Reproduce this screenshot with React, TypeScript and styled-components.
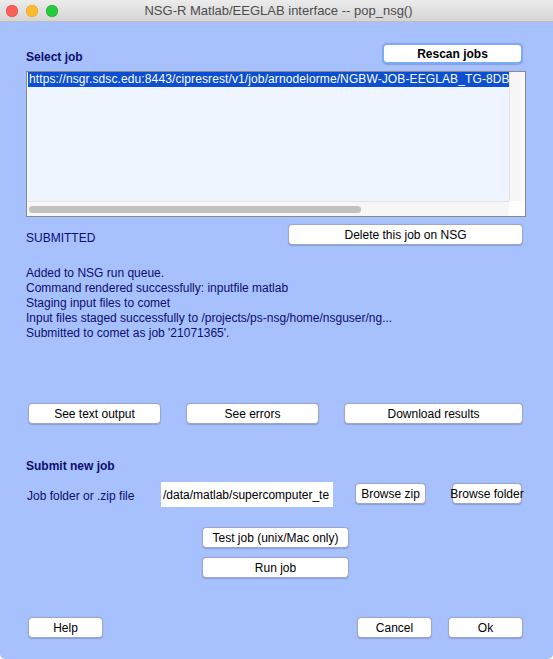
import React from "react";
import styled, { createGlobalStyle } from "styled-components";

const Global = createGlobalStyle`
  html, body { margin: 0; padding: 0; background: #ffffff; }
  body { font-family: "Liberation Sans", Arial, Helvetica, sans-serif; }
  * { box-sizing: border-box; }
`;

const Window = styled.div`
  width: 553px;
  height: 659px;
  background: #a7c0fe;
  display: flex;
  flex-direction: column;
  overflow: hidden;
  border-radius: 0 0 5px 5px;
`;

const TitleBar = styled.div`
  flex: none;
  height: 22px;
  display: grid;
  grid-template-columns: 1fr auto 1fr;
  align-items: center;
  background: linear-gradient(#ececec, #d5d5d5);
  border-bottom: 1px solid #bdbdbd;
`;

const Lights = styled.div`
  display: flex;
  gap: 8px;
  padding-left: 6px;
`;

const Light = styled.span<{ $c: string; $b: string }>`
  width: 12px;
  height: 12px;
  border-radius: 50%;
  background: ${(p) => p.$c};
  box-shadow: inset 0 0 0 0.5px ${(p) => p.$b};
`;

const Title = styled.div`
  font-size: 13px;
  color: #4d4d4d;
  white-space: nowrap;
  padding-left: 4px;
`;

const Body = styled.div`
  flex: 1;
  display: flex;
  flex-direction: column;
  padding: 0 30px 0 26px;
`;

const Row = styled.div<{ $mt: number }>`
  margin-top: ${(p) => p.$mt}px;
  display: flex;
  align-items: flex-start;
  justify-content: space-between;
`;

const Heading = styled.div<{ $mt?: number }>`
  margin-top: ${(p) => p.$mt ?? 0}px;
  font-size: 12px;
  line-height: 14px;
  font-weight: bold;
  color: #0e0e6c;
`;

const BottomHeading = styled(Heading)`
  align-self: flex-end;
`;

const Label = styled.div<{ $pt?: number }>`
  font-size: 12px;
  line-height: 14px;
  color: #0e0e6c;
  padding-top: ${(p) => p.$pt ?? 0}px;
  white-space: nowrap;
`;

const Button = styled.button<{ $w: number; $ml?: number; $mt?: number }>`
  flex: none;
  width: ${(p) => p.$w}px;
  height: 21px;
  margin: ${(p) => p.$mt ?? 0}px 0 0 ${(p) => p.$ml ?? 0}px;
  padding: 0;
  background: #ffffff;
  border: 1px solid #9ba6c8;
  border-radius: 4px;
  box-shadow: 0 0.5px 1px rgba(0, 0, 0, 0.18);
  font-family: "Liberation Sans", Arial, Helvetica, sans-serif;
  font-size: 12px;
  color: #000000;
  white-space: nowrap;
  display: flex;
  align-items: center;
  justify-content: center;
  overflow: visible;
`;

const DefaultButton = styled(Button)`
  border: 2px solid #7aabf4;
  border-radius: 5px;
  font-weight: bold;
`;

const ListBox = styled.div`
  margin-top: 7px;
  width: 500px;
  height: 146px;
  border: 1px solid #8a8a8a;
  background: #eef5ff;
  display: grid;
  grid-template-columns: 1fr 16px;
  grid-template-rows: 1fr 15px;
`;

const ListContent = styled.div`
  overflow: hidden;
  padding: 0 0 0 1px;
`;

const SelectedItem = styled.div`
  height: 15px;
  line-height: 15px;
  background: #0c4fd2;
  color: #ffffff;
  font-size: 12px;
  letter-spacing: 0.11px;
  white-space: nowrap;
  overflow: hidden;
  padding-left: 1px;
`;

const VScroll = styled.div`
  background: #f7f7f7;
  border-left: 1px solid #e4e4e4;
`;

const HScroll = styled.div`
  background: #f6f6f6;
  border-top: 1px solid #e2e2e2;
  display: flex;
  align-items: center;
  padding-left: 2px;
`;

const Thumb = styled.div`
  width: 332px;
  height: 7px;
  border-radius: 4px;
  background: #c1c1c1;
`;

const Corner = styled.div`
  background: #ffffff;
`;

const Messages = styled.div`
  margin-top: 21px;
  font-size: 12px;
  line-height: 15px;
  color: #0e0e6c;
`;

const ButtonRow = styled.div`
  margin-top: 62px;
  padding-left: 2px;
  display: flex;
  justify-content: space-between;
`;

const FieldRow = styled.div`
  margin-top: 9px;
  display: flex;
  align-items: flex-start;
`;

const FieldLabel = styled(Label)`
  width: 135px;
  flex: none;
  padding-top: 7px;
  padding-left: 1px;
`;

const PathInput = styled.input`
  flex: none;
  width: 172px;
  height: 25px;
  border: none;
  outline: none;
  background: #ffffff;
  padding: 0 0 0 2px;
  font-family: "Liberation Sans", Arial, Helvetica, sans-serif;
  font-size: 12px;
  color: #000000;
`;

const CenterColumn = styled.div`
  margin-top: 20px;
  align-self: center;
  display: flex;
  flex-direction: column;
  gap: 9px;
  padding-left: 2px;
`;

const Footer = styled.div`
  margin-top: 39px;
  display: flex;
  align-items: flex-start;
`;

const Spacer = styled.div`
  flex: 1;
`;

export default function App() {
  return (
    <>
      <Global />
      <Window>
        <TitleBar>
          <Lights>
            <Light $c="#fc5f57" $b="#de4841" />
            <Light $c="#fdbc2e" $b="#dd9f22" />
            <Light $c="#28c840" $b="#1eaa31" />
          </Lights>
          <Title>NSG-R Matlab/EEGLAB interface -- pop_nsg()</Title>
          <div />
        </TitleBar>
        <Body>
          <Row $mt={21}>
            <BottomHeading>Select job</BottomHeading>
            <DefaultButton $w={141}>Rescan jobs</DefaultButton>
          </Row>
          <ListBox>
            <ListContent>
              <SelectedItem>
                https://nsgr.sdsc.edu:8443/cipresrest/v1/job/arnodelorme/NGBW-JOB-EEGLAB_TG-8DB
              </SelectedItem>
            </ListContent>
            <VScroll />
            <HScroll>
              <Thumb />
            </HScroll>
            <Corner />
          </ListBox>
          <Row $mt={7}>
            <Label $pt={7}>SUBMITTED</Label>
            <Button $w={235}>Delete this job on NSG</Button>
          </Row>
          <Messages>
            <div>Added to NSG run queue.</div>
            <div>Command rendered successfully: inputfile matlab</div>
            <div>Staging input files to comet</div>
            <div>Input files staged successfully to /projects/ps-nsg/home/nsguser/ng...</div>
            <div>Submitted to comet as job '21071365'.</div>
          </Messages>
          <ButtonRow>
            <Button $w={133}>See text output</Button>
            <Button $w={133}>See errors</Button>
            <Button $w={179}>Download results</Button>
          </ButtonRow>
          <Heading $mt={35}>Submit new job</Heading>
          <FieldRow>
            <FieldLabel>Job folder or .zip file</FieldLabel>
            <PathInput readOnly value="/data/matlab/supercomputer_te" />
            <Button $w={71} $ml={22} $mt={1}>Browse zip</Button>
            <Button $w={70} $ml={26} $mt={1}>Browse folder</Button>
          </FieldRow>
          <CenterColumn>
            <Button $w={147}>Test job (unix/Mac only)</Button>
            <Button $w={147}>Run job</Button>
          </CenterColumn>
          <Footer>
            <Button $w={75} $ml={2}>Help</Button>
            <Spacer />
            <Button $w={75}>Cancel</Button>
            <Button $w={75} $ml={16}>Ok</Button>
          </Footer>
        </Body>
      </Window>
    </>
  );
}
